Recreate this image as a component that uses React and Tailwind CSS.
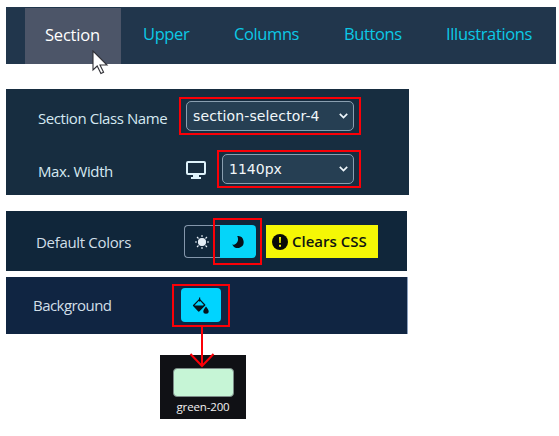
import React from "react";

const tabs = [
  { label: "Upper", style: "w-[66px] tracking-[-0.4px]" },
  { label: "Columns", style: "w-[85px] tracking-[-0.4px]" },
  { label: "Buttons", style: "w-[77px] tracking-[-0.4px]" },
  { label: "Illustrations", style: "w-[100px] tracking-[-0.35px]" },
];

function Chevron() {
  return (
    <svg className="h-[6px] w-[9px] shrink-0" viewBox="0 0 9 6" fill="none" stroke="#eef6fb" strokeWidth="1.7">
      <path d="M.8 .8 4.5 4.5 8.2 .8" />
    </svg>
  );
}

function Select({ children }) {
  return (
    <div className="flex h-full items-center justify-between rounded-[5px] border border-[#8a9fb0] bg-[#263f53] pr-[5px] pl-[6px] font-['DejaVu_Sans',sans-serif] text-[14px] text-[#f1f7fa]">
      {children}
      <Chevron />
    </div>
  );
}

function Sun() {
  return (
    <svg className="mr-[2px] h-[14px] w-[14px]" viewBox="0 0 14 14" stroke="#e4edf5" strokeWidth="1.1">
      <circle cx="7" cy="7" r="3.5" fill="#e4edf5" />
      <path d="M7 0v2M7 12v2M0 7h2M12 7h2M2 2l1.5 1.5M10.5 10.5 12 12M2 12l1.5-1.5M10.5 3.5 12 2" />
    </svg>
  );
}

export default function App() {
  return (
    <div className="relative h-[436px] w-[559px] overflow-hidden bg-white pt-[7px] pl-[6px] font-['Open_Sans',sans-serif] whitespace-nowrap">
      <nav className="flex h-[57px] w-[550px] bg-[#21364c] pl-[19px] text-[16.5px] text-[#0cc9e6]">
        <div className="mt-px flex w-[96px] shrink-0 items-center bg-[#4c5568] pb-px pl-[20px] tracking-[-0.2px] text-white">Section</div>
        <div className="flex items-center gap-[25px] pb-[3px] pl-[22px]">
          {tabs.map((t) => (
            <span key={t.label} className={t.style}>{t.label}</span>
          ))}
        </div>
      </nav>

      <section className="mt-[25px] h-[106px] w-[403px] bg-[#172d40] pt-[8px] pl-[32px] text-[15px] text-[#d5e9f2]">
        <div className="flex h-[38px] items-center">
          <span className="w-[141px] pt-[4px] tracking-[-0.42px]">Section Class Name</span>
          <div className="h-[38px] w-[182px] border-2 border-[#fb0007] py-[2px] pr-[5px] pl-[5px]">
            <Select><span className="tracking-[0.12px]">section-selector-4</span></Select>
          </div>
        </div>
        <div className="mt-[15px] flex h-[38px] items-center">
          <span className="w-[148px] pt-[5px] tracking-[-0.4px]">Max. Width</span>
          <svg className="mt-[2px] h-[18px] w-[20px]" viewBox="0 0 20 18" fill="none">
            <rect x="1" y="1" width="18" height="12" rx="1" stroke="#def2fb" strokeWidth="2" />
            <path d="M7 14h6v2h2v2H5v-2h2z" fill="#def2fb" />
          </svg>
          <div className="ml-[11px] h-[38px] w-[144px] border-2 border-[#fb0007] py-[2px] pr-[5px] pl-[3px]">
            <Select>1140px</Select>
          </div>
        </div>
      </section>

      <section className="mt-[16px] flex h-[60px] w-[401px] bg-[#10263a] pt-[14px] pl-[30px] text-[#d1dfe8]">
        <span className="w-[148px] pt-[6px] text-[15px] tracking-[-0.32px]">Default Colors</span>
        <div className="relative flex h-[33px] w-[72px]">
          <div className="flex w-[36px] items-center justify-center rounded-l-[4px] border border-r-0 border-[#8496ab]"><Sun /></div>
          <div className="flex w-[36px] items-center justify-center rounded-r-[4px] bg-[#05d5f9]">
            <svg className="mr-px h-[12px] w-[12px]" viewBox="0 0 12 12" fill="#071019">
              <path d="M5.2 0A6 6 0 1 1 .2 8.600C4.500 9.400 7.600 4.300 5.200 0Z" />
            </svg>
          </div>
          <div className="absolute -top-[7px] left-[29px] h-[47px] w-[49px] border-2 border-[#fb0007]" />
        </div>
        <div className="ml-[10px] flex h-[33px] w-[112px] items-center bg-[#f5f705] pl-[6px] text-[15px] font-semibold text-[#101510]">
          <svg className="mr-[4px] h-[16px] w-[16px]" viewBox="0 0 16 16">
            <circle cx="8" cy="8" r="8" fill="#070a08" />
            <path d="M7 3h2l-.3 6H7.300zM7 10.700h2v2H7z" fill="#f5f705" />
          </svg>
          <span>Clears CSS</span>
        </div>
      </section>

      <section className="mt-[6px] flex h-[57px] w-[402px] border-r border-[#8ca0bd] bg-[#102542] pt-[7px] pl-[27px] text-[#d1dfe8]">
        <span className="w-[139px] pt-[10px] text-[15px] tracking-[-0.55px]">Background</span>
        <div className="h-[43px] w-[58px] border-2 border-[#fb0007] pt-[2px] pl-[7px]">
          <div className="flex h-[34px] w-[40px] items-center justify-center rounded-[4px] bg-[#00d4ff]">
            <svg className="mr-px h-[17px] w-[17px]" viewBox="0 0 17 17">
              <path d="M7.500 2.300 1.500 8.500 6.800 14 12.800 8Z" fill="none" stroke="#06131b" strokeWidth="1.2" strokeLinejoin="round" />
              <path d="M1.500 8.500h11l-4.700 5.100q-1 .9-2 0ZM7 .500h1.200v4H7z" fill="#06131b" />
              <path d="M14 9.500c1.200 1.900 2.700 3.200 2.700 4.800a2.700 2.500 0 0 1-5.400 0c0-1.600 1.500-2.900 2.700-4.800Z" fill="#06131b" />
            </svg>
          </div>
        </div>
      </section>

      <section className="mt-[21px] ml-[154px] flex h-[64px] w-[86px] flex-col items-center bg-[#101115] pt-[13px] text-[#f2f2f2]">
        <div className="h-[29px] w-[61px] rounded-[4px] border border-[#7b8b87] bg-[#c6f5d6]" />
        <span className="mt-[2px] text-[11.5px] leading-[16px] tracking-[-0.15px]">green-200</span>
      </section>

      <svg className="absolute top-[326px] left-[188px] h-[42px] w-[28px]" viewBox="0 0 28 42" fill="none" stroke="#fb0007" strokeWidth="2">
        <path d="M14 0v40M2.500 28 14 40 25.500 28" />
      </svg>
      <svg className="absolute top-[50px] left-[92px] h-[25px] w-[17px]" viewBox="0 0 17 25">
        <path d="M1 1v19l4.200-4 3.700 7.500 2.700-1.300L8 15h7Z" fill="white" stroke="#303036" strokeWidth="1.1" />
      </svg>
    </div>
  );
}
